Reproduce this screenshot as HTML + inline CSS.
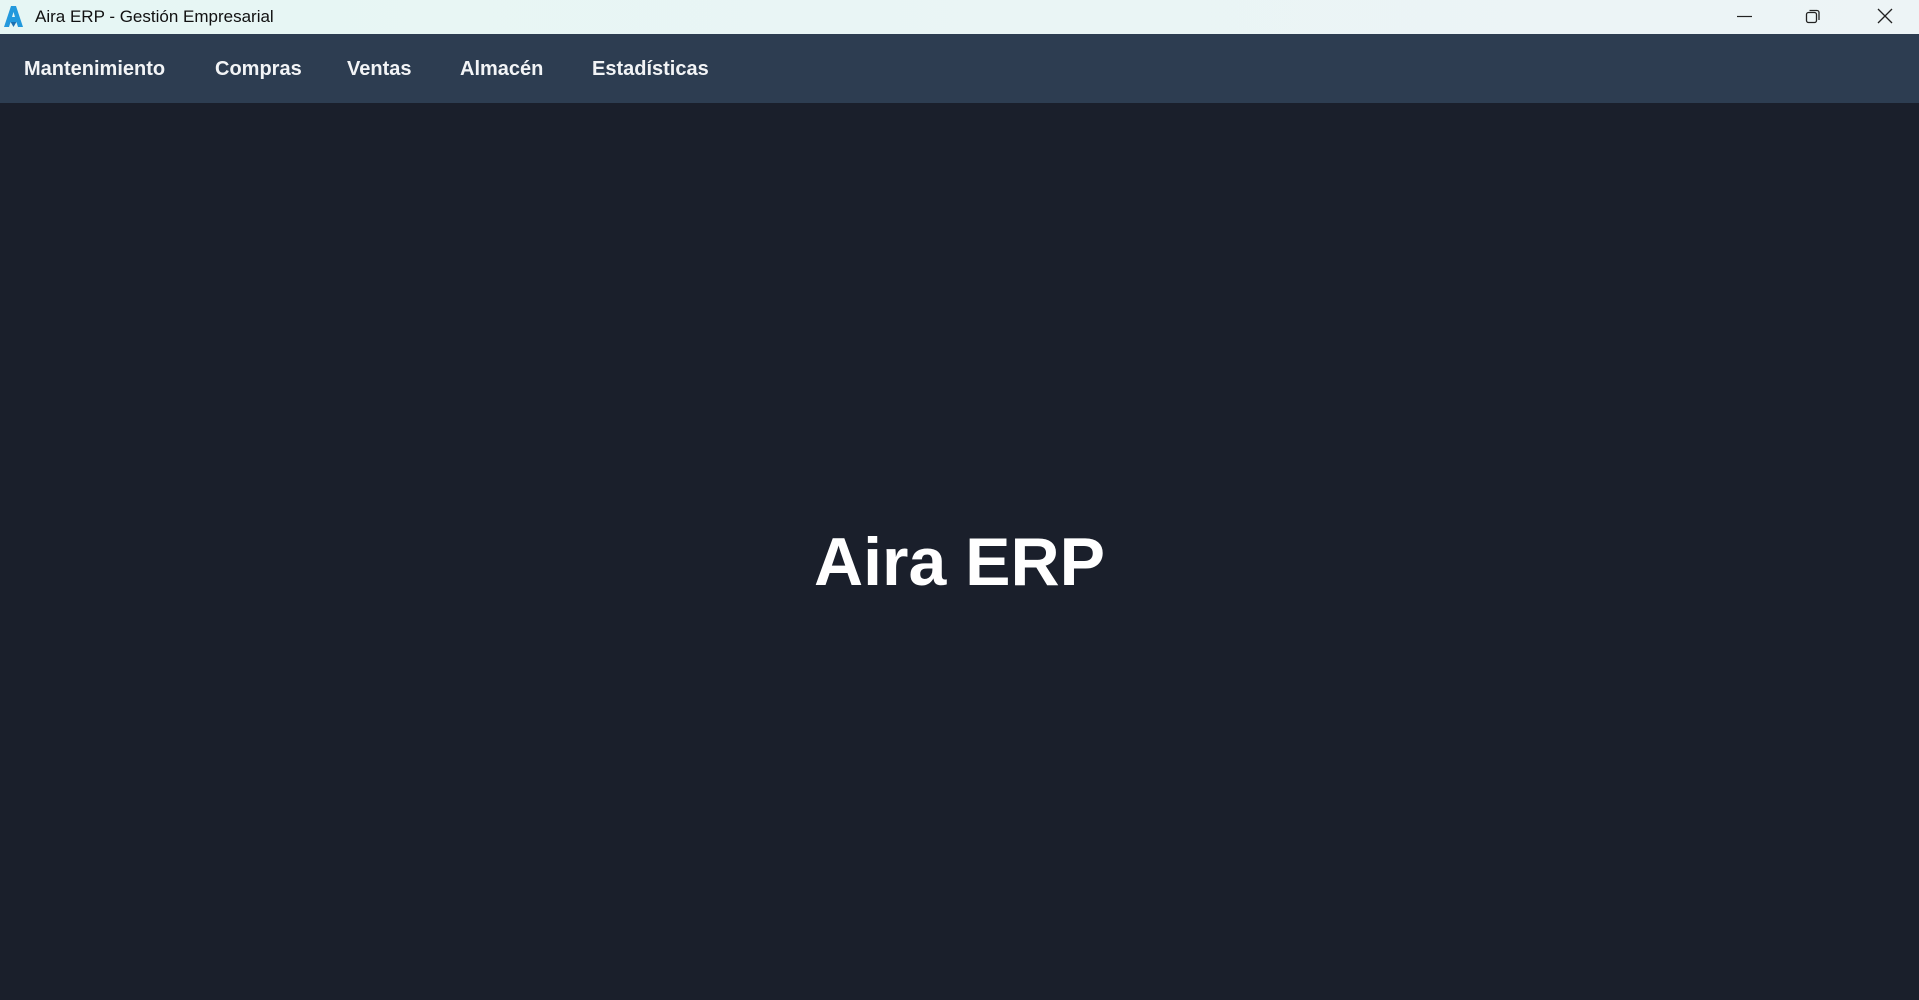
<!DOCTYPE html>
<html><head><meta charset="utf-8"><style>
html,body{margin:0;padding:0;width:1919px;height:1000px;overflow:hidden;background:#1a1f2b;font-family:"Liberation Sans",sans-serif}
.tb{position:absolute;left:0;top:0;width:1919px;height:34px;background:linear-gradient(90deg,#e6f6f4,#edf4f6)}
.tb .t{position:absolute;left:35px;top:7px;font-size:17px;color:#111;letter-spacing:0px}
.nav{position:absolute;left:0;top:34px;width:1919px;height:69px;background:#2d3d51}
.nav span{position:absolute;top:24px;font-size:20px;font-weight:bold;color:#f2f4f6;letter-spacing:0px}
.h{position:absolute;left:0;width:1919px;top:523px;text-align:center;font-size:68px;font-weight:bold;color:#fff}
</style></head><body>
<div class="tb">
<svg style="position:absolute;left:4px;top:6px" width="19" height="21" viewBox="0 0 19 21"><path d="M7 0h5l7 21h-5l-1.6-5H6.6L5 21H0z" fill="#2299dd"/><path d="M8 11h3l-1.5-5z" fill="#e6f6f4"/><path d="M6.6 16h5.8L9.5 21z" fill="#1a6fb0"/></svg>
<div class="t">Aira ERP - Gestión Empresarial</div>
<svg style="position:absolute;left:1736px;top:8px" width="18" height="18"><line x1="1" y1="8.5" x2="16" y2="8.5" stroke="#222" stroke-width="1.2"/></svg>
<svg style="position:absolute;left:1805px;top:8px" width="18" height="18"><rect x="1.5" y="4.5" width="10" height="10" rx="2" fill="none" stroke="#222" stroke-width="1.3"/><path d="M4.5 2.5h7.5a2 2 0 0 1 2 2v7.5" fill="none" stroke="#222" stroke-width="1.3"/></svg>
<svg style="position:absolute;left:1876px;top:7px" width="18" height="18"><path d="M2 2L16 16M16 2L2 16" stroke="#222" stroke-width="1.3"/></svg>
</div>
<div class="nav">
<span style="left:24px">Mantenimiento</span>
<span style="left:215px">Compras</span>
<span style="left:347px">Ventas</span>
<span style="left:460px">Almacén</span>
<span style="left:592px">Estadísticas</span>
</div>
<div class="h">Aira ERP</div>
</body></html>
